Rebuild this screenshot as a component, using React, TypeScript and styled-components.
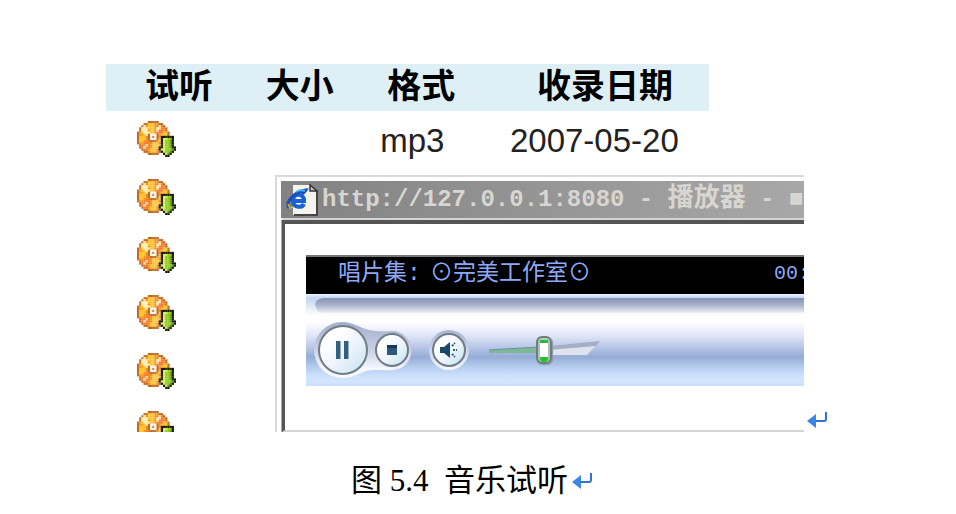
import React from "react";
import styled, { createGlobalStyle } from "styled-components";

const GlobalStyle = createGlobalStyle`
  * { box-sizing: border-box; }
  body { margin: 0; background: #fff; color: #000; }
`;

const sans = `"Liberation Sans", "Noto Sans CJK SC", sans-serif`;
const mono = `"Liberation Mono", "Noto Sans CJK SC", monospace`;

const Page = styled.main`
  padding: 64px 129px 0 106px;
  overflow: hidden;
`;

const FigureLine = styled.div`
  display: flex;
  align-items: flex-end;
  gap: 3px;
`;

const Screen = styled.div`
  position: relative;
  flex: 1;
  height: 368px;
  overflow: hidden;
`;

const SongTable = styled.table`
  width: calc(100% - 95px);
  table-layout: fixed;
  border-collapse: collapse;
  font-family: ${sans};
`;

const Head = styled.th<{ $indent: number; $width?: string }>`
  width: ${(p) => p.$width ?? "auto"};
  height: 47px;
  padding: 0 0 4px ${(p) => p.$indent}px;
  background: #dfeff6;
  text-align: left;
  font-size: 34px;
  line-height: 40px;
  font-weight: 700;
  white-space: nowrap;
`;

const Cell = styled.td<{ $indent: number }>`
  height: 58px;
  padding: 10px 0 0 ${(p) => p.$indent}px;
  vertical-align: top;
  color: #222;
  font-size: 33px;
  line-height: 40px;
  white-space: nowrap;
`;

const IconButton = styled.button`
  display: block;
  padding: 0;
  border: 0;
  background: none;
  svg { display: block; }
`;

const Popup = styled.section`
  position: absolute;
  top: 111px;
  left: 169px;
  right: 0;
  bottom: 0;
  display: flex;
  flex-direction: column;
  padding: 4px 0 0 4px;
  border-top: 2px solid #dcdad7;
  border-left: 2px solid #dcdad7;
  background: #fff;
`;

const TitleBar = styled.header`
  display: flex;
  align-items: center;
  gap: 4px;
  height: 37px;
  flex: none;
  padding-left: 5px;
  background: linear-gradient(90deg, #828282, #a8a8a8);
  color: #d8d6d0;
  font: 700 24px/36px ${mono};
  white-space: pre;
  overflow: hidden;
  svg { flex: none; }
`;

const TitleText = styled.h1`
  margin: 0;
  font: inherit;
`;

const TitleHan = styled.span`
  font-size: 26px;
`;

const Client = styled.div`
  flex: 1;
  margin: 2px 0 0 1px;
  padding: 31px 0 0 21px;
  border-top: 4px solid #555;
  border-left: 3px solid #555;
  border-bottom: 2px solid #d6d4d0;
  box-shadow: 0 -2px 0 #d6d4d0, -1px 0 0 #aaa;
`;

const Display = styled.div`
  display: flex;
  justify-content: space-between;
  height: 39px;
  padding: 0 0 0 32px;
  border-top: 2px solid #777;
  background: #000;
  color: #8ea8f8;
  font: 20px/34px ${mono};
  white-space: nowrap;
  overflow: hidden;
`;

const Album = styled.div`
  display: flex;
  font-size: 23px;
`;

const AlbumLabel = styled.span`
  width: 92px;
`;

const Clock = styled.span`
  width: 30px;
`;

const Deck = styled.div`
  height: 92px;
  background: linear-gradient(
    180deg,
    #eef3ff 0,
    #c3d5f2 4px,
    #fff 22px,
    #fff 28px,
    #dfe5f7 42px,
    #b5c4e6 54px,
    #96acd6 63px,
    #b5cdee 73px,
    #cde1fd 82px,
    #d2e5ff 88px,
    #cbdcff 92px
  );
`;

const Seek = styled.div`
  height: 20px;
  margin-left: 9px;
  border-top: 4px solid transparent;
  border-radius: 10px 0 0 10px;
  background: linear-gradient(180deg, #8593b5, #a9b2cb 7px, #dcdfe9 13px, #fff 16px) padding-box;
`;

const Controls = styled.div`
  display: flex;
  align-items: center;
  height: 72px;
  padding-left: 8px;
`;

const Transport = styled.div`
  position: relative;
  display: flex;
  align-items: center;
  gap: 7px;
  width: 104px;
  height: 64px;
  padding-left: 4px;
`;

const Pod = styled.svg`
  position: absolute;
  inset: 0;
`;

const Round = styled.button<{ $size: number }>`
  position: relative;
  display: grid;
  place-items: center;
  width: ${(p) => p.$size}px;
  height: ${(p) => p.$size}px;
  padding: 0;
  border: 2px solid #727c88;
  border-radius: 50%;
  background: linear-gradient(135deg, #fff 25%, #eef4fc 55%, #c4e4f0);
`;

const MuteRing = styled.div`
  display: grid;
  place-items: center;
  width: 40px;
  height: 40px;
  margin-left: 11px;
  border-radius: 50%;
  background: linear-gradient(180deg, #a9b3cf, #cdd8ee 55%, #f4f8ff);
`;

const Volume = styled.label`
  position: relative;
  display: block;
  width: 112px;
  height: 30px;
  margin-left: 20px;
`;

const VolumeRange = styled.input`
  position: absolute;
  inset: 0;
  width: 100%;
  height: 100%;
  margin: 0;
  appearance: none;
  background: transparent;
  &::-webkit-slider-thumb {
    appearance: none;
    width: 16px;
    height: 28px;
    border: 2px solid #6d8078;
    border-radius: 6px;
    background: linear-gradient(180deg, #a9dcae 0 2px, #2fb43c 2px 5px, #fff 5px 19px, #1fc32c 19px);
    box-shadow: inset 2px 0 0 #b3bdc0, inset -2px 0 0 #b3bdc0, 1px 1px 1px #8794a8;
  }
`;

const Caption = styled.p`
  display: flex;
  align-items: center;
  justify-content: center;
  gap: 4px;
  margin: 26px 0 0;
  padding-left: 10px;
  font: 400 31px/46px "Liberation Serif", "Noto Sans CJK SC", serif;
  white-space: pre;
`;

const discPixels = [
  ".....BBBBB........",
  "...BBYYYOOBB......",
  "..BWOYYYORWRB.....",
  ".BWWWYYYOWWRRB....",
  ".BWWWOYYOWRROB....",
  "BOYWWWYYORRRYYB...",
  "BOOYWBLLLBOYYYB...",
  "BYYYOBLRLBOKKKKKK.",
  "BYYYOBLLLBYKHHGGK.",
  "BYYORRBBBOYKHGGDK.",
  "BOORRROYYYOKHGGDK.",
  ".BRRWROYYYYKHGGDK.",
  ".BRWRROYYYKKHGGDKK",
  "..BRROYYYOKHHGGGDK",
  "...BBOYYYOBKHGGDK.",
  ".....BBBBB..KHDK..",
  ".............KK...",
];

const discColors: Record<string, string> = {
  B: "#bf681e",
  Y: "#ffc12e",
  O: "#ee951f",
  W: "#ffedb0",
  R: "#f5782c",
  L: "#fff8ee",
  K: "#171c08",
  H: "#d2ec63",
  G: "#8cc81f",
  D: "#5f9c12",
};

const DiscIcon = () => (
  <svg width="39" height="36" viewBox="0 0 18 17" preserveAspectRatio="none" aria-hidden="true">
    {discPixels.flatMap((row, y) =>
      [...row].map((c, x) =>
        c === "." ? null : <rect key={`${x}-${y}`} x={x} y={y} width="1.05" height="1.05" fill={discColors[c]} />
      )
    )}
  </svg>
);

const BrowserIcon = () => (
  <svg width="32" height="32" viewBox="0 0 32 32" aria-hidden="true">
    <path d="M7 1h18l6 6v24H7z" fill="#f4f3ec" />
    <path d="M31 7v24H8" fill="none" stroke="#454545" strokeWidth="2" />
    <path d="M24 1v6h7z" fill="#c9c8c0" stroke="#333" strokeWidth="1.5" />
    <path d="M18 20c-2 4-10 4-11-2C6 10 16 8 18 15v2H8" fill="none" stroke="#1763d6" strokeWidth="4" />
    <path d="M3 24C-1 19 7 8 20 6c-1 2-3 3-4 4" fill="none" stroke="#1a4fb4" strokeWidth="3" />
    <path d="M10 8c3-2 6-2 9-1" fill="none" stroke="#45b5f2" strokeWidth="2" />
    <path d="M2 20l2 4 3-1" fill="none" stroke="#d4b43c" strokeWidth="1.5" />
  </svg>
);

const ReturnMark = () => (
  <svg width="20" height="18" viewBox="0 0 20 18" aria-hidden="true">
    <path d="M19 1v7q0 2-2 2H8" fill="none" stroke="#2f72cf" strokeWidth="2" />
    <path d="M0 10l9-7v14z" fill="#3a86e4" />
  </svg>
);

const MarkSlot = styled.span`
  display: flex;
  padding-bottom: 3px;
`;

const rows = [
  { format: "mp3", date: "2007-05-20" },
  { format: "", date: "" },
  { format: "", date: "" },
  { format: "", date: "" },
  { format: "", date: "" },
  { format: "", date: "" },
];

export default function App() {
  return (
    <>
      <GlobalStyle />
      <Page>
        <FigureLine>
          <Screen>
            <SongTable>
              <thead>
                <tr>
                  <Head $indent={39} $width="24%">试听</Head>
                  <Head $indent={15} $width="19%">大小</Head>
                  <Head $indent={22} $width="22%">格式</Head>
                  <Head $indent={39}>收录日期</Head>
                </tr>
              </thead>
              <tbody>
                {rows.map((r, i) => (
                  <tr key={i}>
                    <Cell $indent={31}>
                      <IconButton aria-label="试听"><DiscIcon /></IconButton>
                    </Cell>
                    <Cell $indent={15} />
                    <Cell $indent={15}>{r.format}</Cell>
                    <Cell $indent={12}>{r.date}</Cell>
                  </tr>
                ))}
              </tbody>
            </SongTable>
            <Popup>
              <TitleBar>
                <BrowserIcon />
                <TitleText>
                  http://127.0.0.1:8080 - <TitleHan>播放器</TitleHan> - ■
                </TitleText>
              </TitleBar>
              <Client>
                <Display>
                  <Album>
                    <AlbumLabel>唱片集:</AlbumLabel>
                    <span>⊙完美工作室⊙</span>
                  </Album>
                  <Clock>00:</Clock>
                </Display>
                <Deck>
                  <Seek />
                  <Controls>
                    <Transport>
                      <Pod width="104" height="64" viewBox="0 0 104 64" aria-hidden="true">
                        <defs>
                          <linearGradient id="pod" x1="0" y1="0" x2="0" y2="1">
                            <stop offset="0" stopColor="#a3adc9" />
                            <stop offset="0.5" stopColor="#c9d1e6" />
                            <stop offset="0.85" stopColor="#f6f9ff" />
                          </linearGradient>
                        </defs>
                        <path
                          d="M28 4C39 4 46 10 55 12C64 14 70 13 78 13A19 19 0 0 1 78 52C68 53 61 51 52 53C45 55 40 60 28 60A28 28 0 0 1 28 4Z"
                          fill="url(#pod)"
                        />
                      </Pod>
                      <Round $size={50} aria-label="暂停">
                        <svg width="16" height="20" viewBox="0 0 16 20" aria-hidden="true">
                          <path d="M1 1h5v18H1zM9 1h5v18H9z" fill="#34607f" />
                          <path d="M5 1h1v18H5zM13 1h1v18h-1z" fill="#8eafc4" />
                        </svg>
                      </Round>
                      <Round $size={34} aria-label="停止">
                        <svg width="12" height="12" viewBox="0 0 12 12" aria-hidden="true">
                          <path d="M1 1h10v10H1z" fill="#2e5878" />
                          <path d="M1 1h10v3H1z" fill="#163a58" />
                        </svg>
                      </Round>
                    </Transport>
                    <MuteRing>
                      <Round $size={34} aria-label="静音">
                        <svg width="20" height="18" viewBox="0 0 20 18" aria-hidden="true">
                          <path d="M1 6h4l6-5v16l-6-5H1z" fill="#1b4767" />
                          <path d="M13 5l3-3M14 9h4M13 13l3 3" stroke="#315b78" strokeWidth="2" strokeDasharray="2 1" />
                        </svg>
                      </Round>
                    </MuteRing>
                    <Volume>
                      <svg width="112" height="30" viewBox="0 0 112 30" aria-hidden="true">
                        <path d="M0 15L50 12v6L0 18z" fill="#7db897" />
                        <path d="M0 15L50 12" stroke="#6d8fa0" />
                        <path d="M60 11L111 6L98 20H60z" fill="#dfe3ee" />
                        <path d="M60 11L111 6L107 11L60 15z" fill="#a6aec6" />
                      </svg>
                      <VolumeRange type="range" min="0" max="100" defaultValue="49" aria-label="音量" />
                    </Volume>
                  </Controls>
                </Deck>
              </Client>
            </Popup>
          </Screen>
          <MarkSlot><ReturnMark /></MarkSlot>
        </FigureLine>
        <Caption>
          <span>{"图 5.4  音乐试听"}</span>
          <ReturnMark />
        </Caption>
      </Page>
    </>
  );
}
